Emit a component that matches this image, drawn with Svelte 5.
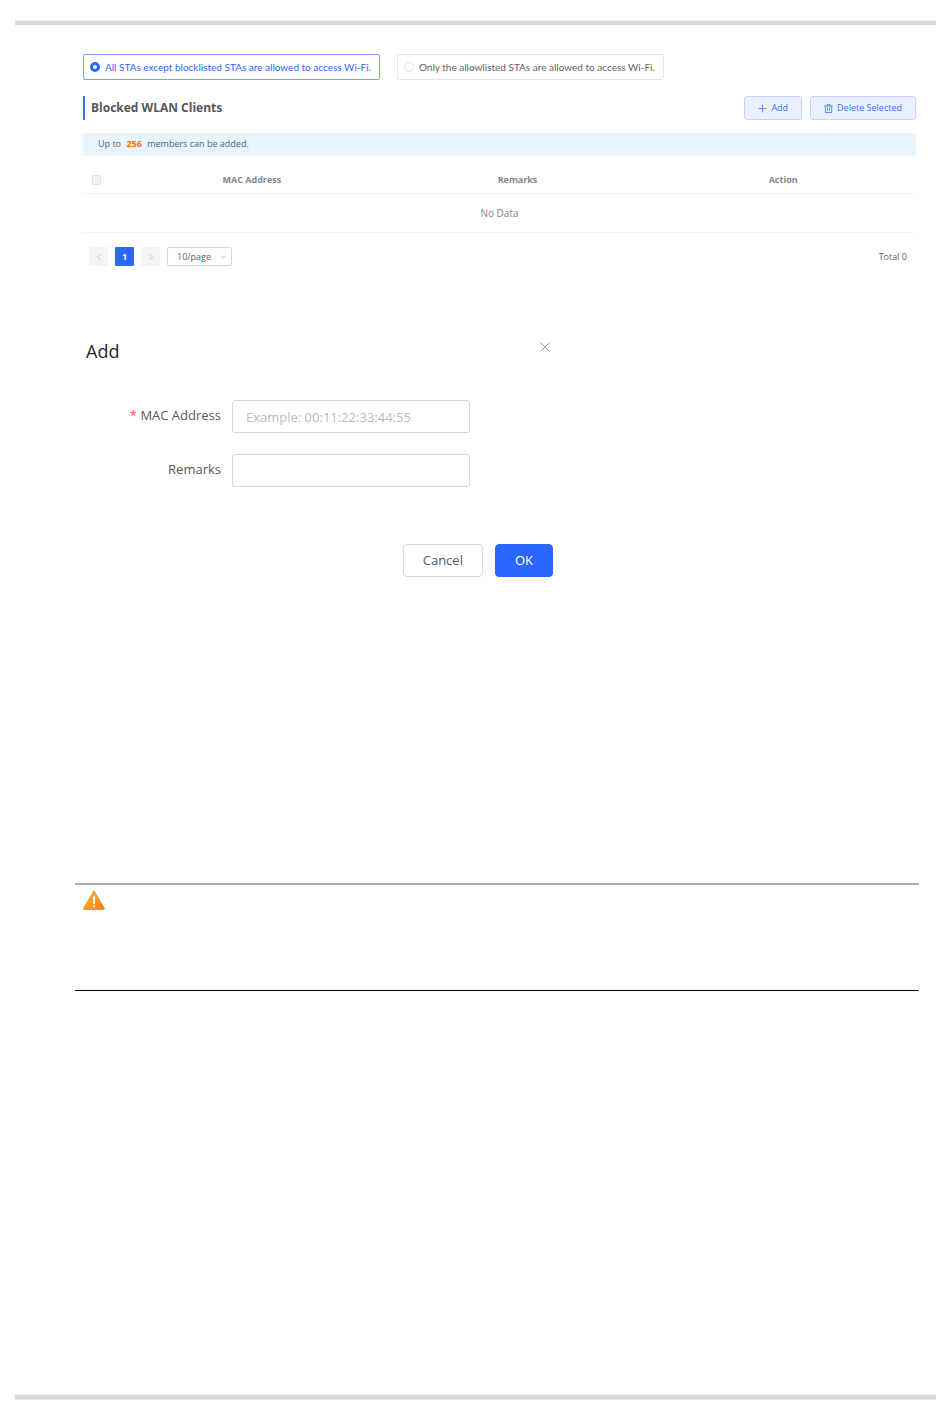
<script>
    let access = $state('block');
    let pageSize = $state('10');
    let allChecked = $state(false);
    let mac = $state('');
    let remarks = $state('');

    const modes = [
        { value: 'block', label: 'All STAs except blocklisted STAs are allowed to access Wi-Fi.' },
        { value: 'allow', label: 'Only the allowlisted STAs are allowed to access Wi-Fi.' },
    ];

    function onSubmit(e) {
        e.preventDefault();
    }

    function reset() {
        mac = '';
        remarks = '';
    }
</script>

<div class="page">
    <main>
        <section class="clients">
            <div class="modes">
                {#each modes as mode}
                    <label class="mode" class:active={access === mode.value}>
                        <input type="radio" name="access" value={mode.value} bind:group={access}>
                        {mode.label}
                    </label>
                {/each}
            </div>

            <header class="title-row">
                <h2>Blocked WLAN Clients</h2>
                <button type="button" class="tool">
                    <svg width="9" height="9" viewBox="0 0 9 9"><path d="M4.5 .5v8M.5 4.5h8" /></svg>
                    Add
                </button>
                <button type="button" class="tool">
                    <svg width="9" height="9" viewBox="0 0 9 9"><path d="M.3 2h8.4M3 2V.6h3V2M1.3 2v6.5h6.4V2M3.5 3.6v3.3M5.5 3.6v3.3" /></svg>
                    Delete Selected
                </button>
            </header>

            <p class="notice">Up to <strong>256</strong> members can be added.</p>

            <table>
                <thead>
                    <tr>
                        <th class="check"><input type="checkbox" aria-label="Select all" bind:checked={allChecked}></th>
                        <th>MAC Address</th>
                        <th>Remarks</th>
                        <th>Action</th>
                    </tr>
                </thead>
                <tbody>
                    <tr><td colspan="4">No Data</td></tr>
                </tbody>
            </table>

            <nav class="pager">
                <button type="button" disabled aria-label="Previous page">
                    <svg width="6" height="8" viewBox="0 0 6 8"><path d="M4.5 1L1.5 4l3 3" /></svg>
                </button>
                <button type="button" class="current">1</button>
                <button type="button" disabled aria-label="Next page">
                    <svg width="6" height="8" viewBox="0 0 6 8"><path d="M1.5 1l3 3-3 3" /></svg>
                </button>
                <div class="size">
                    <select aria-label="Page size" bind:value={pageSize}>
                        <option value="10">10/page</option>
                        <option value="20">20/page</option>
                        <option value="50">50/page</option>
                    </select>
                    <svg width="6" height="4" viewBox="0 0 6 4"><path d="M.5 .5L3 3l2.500-2.500" /></svg>
                </div>
                <span class="total">Total 0</span>
            </nav>
        </section>

        <form class="dialog" onsubmit={onSubmit}>
            <header>
                <h3>Add</h3>
                <button type="button" class="close" aria-label="Close" onclick={reset}>
                    <svg width="10" height="10" viewBox="0 0 10 10"><path d="M.7 .7l8.600 8.600M9.300 .7L.7 9.300" /></svg>
                </button>
            </header>
            <div class="field">
                <label for="mac"><span class="required">*</span> MAC Address</label>
                <input id="mac" type="text" placeholder="Example: 00:11:22:33:44:55" bind:value={mac}>
            </div>
            <div class="field">
                <label for="remarks">Remarks</label>
                <input id="remarks" type="text" bind:value={remarks}>
            </div>
            <footer>
                <button type="button" onclick={reset}>Cancel</button>
                <button type="submit" class="primary">OK</button>
            </footer>
        </form>

        <aside class="caution">
            <svg width="22" height="20" viewBox="0 0 22 20">
                <defs>
                    <linearGradient id="amber" x1="0" y1="0" x2="1" y2="1">
                        <stop offset="0" stop-color="#f79a2c" />
                        <stop offset=".45" stop-color="#ffa21f" />
                        <stop offset="1" stop-color="#ef7d1a" />
                    </linearGradient>
                </defs>
                <path d="M11 .8L21.300 18.200q.4 1.300-.8 1.300H1.500q-1.200 0-.8-1.300z" fill="url(#amber)" stroke="#d98a45" stroke-width=".8" />
                <path d="M10 6.500h2.200l-.4 7.500h-1.400z" fill="#fff" />
                <circle cx="11.100" cy="16.300" r="1.100" fill="#fff" />
            </svg>
        </aside>
    </main>
</div>

<style>
    :global(body) {
        background: #fff;
    }

    .page {
        box-sizing: border-box;
        min-height: 100vh;
        padding: 20px 14px 19px 15px;
        display: flex;
        flex-direction: column;
        font-family: "Open Sans", "Noto Sans", sans-serif;
        font-size: 9px;
        line-height: 12px;
        color: #606266;
    }

    .page::before,
    .page::after {
        content: "";
        height: 4px;
        background: #d9d9d9;
        border: solid #ececec;
        border-width: 1px 0 0;
    }

    .page::after {
        border-width: 1px 0;
    }

    main {
        flex: 1;
        padding: 29px 17px 0 60px;
    }

    h2, h3, p {
        margin: 0;
    }

    button, input, select {
        box-sizing: border-box;
        margin: 0;
        font: inherit;
        color: inherit;
    }

    svg {
        display: block;
        fill: none;
        stroke: currentColor;
        stroke-width: .8;
    }

    .clients {
        margin: 0 3px 0 8px;
    }

    .modes {
        display: flex;
        gap: 17px;
    }

    .mode {
        display: flex;
        align-items: center;
        gap: 5px;
        padding: 6px 8px 6px 6px;
        border: 1px solid #e4e4e6;
        border-radius: 2px;
        font-family: Lato, "Open Sans", sans-serif;
        font-size: 10px;
    }

    .mode.active {
        border-color: #7fa3fb;
        color: #2b67fc;
    }

    .mode input {
        appearance: none;
        width: 10px;
        height: 10px;
        border: 1px solid #e2e4ea;
        border-radius: 50%;
        background: #fff;
    }

    .mode input:checked {
        border: 3px solid #2b67fc;
    }

    .title-row {
        display: flex;
        gap: 8px;
        margin-top: 16px;
    }

    h2 {
        flex: 1;
        padding-left: 6px;
        border-left: 2px solid #3a70f5;
        font-size: 12px;
        line-height: 24px;
        color: #55575c;
    }

    .tool {
        display: flex;
        align-items: center;
        gap: 4px;
        padding: 0 13px;
        border: 1px solid #c5d5fd;
        border-radius: 3px;
        background: #eaf0ff;
        color: #3e70f4;
    }

    .notice {
        margin-top: 13px;
        padding: 5px 15px 6px;
        border-radius: 2px;
        background: #e8f4fe;
    }

    .notice strong {
        margin: 0 3px;
        color: #f37312;
    }

    table {
        width: 100%;
        margin-top: 10px;
        border-collapse: collapse;
        table-layout: fixed;
        text-align: center;
    }

    th, td {
        padding: 0;
        border-bottom: 1px solid #f5f5f6;
        color: #85878c;
    }

    th {
        height: 27px;
    }

    td {
        height: 38px;
        font-size: 10px;
    }

    .check {
        width: 36px;
        text-align: left;
    }

    .check input {
        appearance: none;
        display: block;
        width: 9px;
        height: 10px;
        margin-left: 9px;
        border: 1px solid #dfe2ea;
        border-radius: 1px;
        background: #edf2fc;
    }

    .check input:checked {
        background: #2b67fc;
    }

    .pager {
        display: flex;
        align-items: center;
        gap: 7px;
        margin-top: 14px;
        padding: 0 9px 0 6px;
    }

    .pager button {
        display: flex;
        align-items: center;
        justify-content: center;
        width: 19px;
        height: 19px;
        padding: 0;
        border: 0;
        border-radius: 1px;
        background: #f4f4f5;
        color: #b8bbc2;
    }

    .pager .current {
        background: #2b67fc;
        color: #fff;
        font-weight: bold;
    }

    .size {
        position: relative;
    }

    .size select {
        appearance: none;
        width: 65px;
        height: 19px;
        padding: 0 9px;
        border: 1px solid #d6d7da;
        border-radius: 2px;
        background: #fff;
    }

    .size svg {
        position: absolute;
        top: 8px;
        right: 6px;
        color: #b8bbc2;
        pointer-events: none;
    }

    .total {
        margin-left: auto;
    }

    .dialog {
        max-width: 470px;
        margin-top: 74px;
        padding: 0 0 0 8px;
        font-size: 13px;
        line-height: 20px;
        color: #55575c;
    }

    .dialog header {
        display: flex;
        justify-content: space-between;
        align-items: flex-start;
        margin-bottom: 38px;
        padding: 0 3px;
    }

    h3 {
        font-size: 18px;
        font-weight: normal;
        line-height: 22px;
        color: #26272b;
    }

    .close {
        padding: 2px 0;
        border: 0;
        background: none;
        color: #85878c;
    }

    .field {
        display: flex;
        align-items: center;
        gap: 11px;
        margin-bottom: 21px;
    }

    .field label {
        width: 138px;
        padding-bottom: 4px;
        text-align: right;
    }

    .required {
        color: #f04b4b;
    }

    .field input {
        width: 238px;
        height: 33px;
        padding: 0 13px;
        border: 1px solid #d6d7da;
        border-radius: 3px;
        background: #fff;
    }

    .field input::placeholder {
        color: #b8babf;
    }

    .dialog footer {
        display: flex;
        justify-content: flex-end;
        gap: 12px;
        margin-top: 57px;
    }

    .dialog footer button {
        height: 33px;
        padding: 0 19px 2px;
        border: 1px solid #d6d7da;
        border-radius: 4px;
        background: #fff;
    }

    .dialog footer .primary {
        border-color: #2b67fc;
        background: #2b67fc;
        color: #fff;
    }

    .caution {
        height: 100px;
        margin-top: 306px;
        padding: 5px 0 0 8px;
        border-top: 2px solid #adabab;
        border-bottom: 1px solid #000;
    }

    .caution svg {
        stroke: none;
    }
</style>
